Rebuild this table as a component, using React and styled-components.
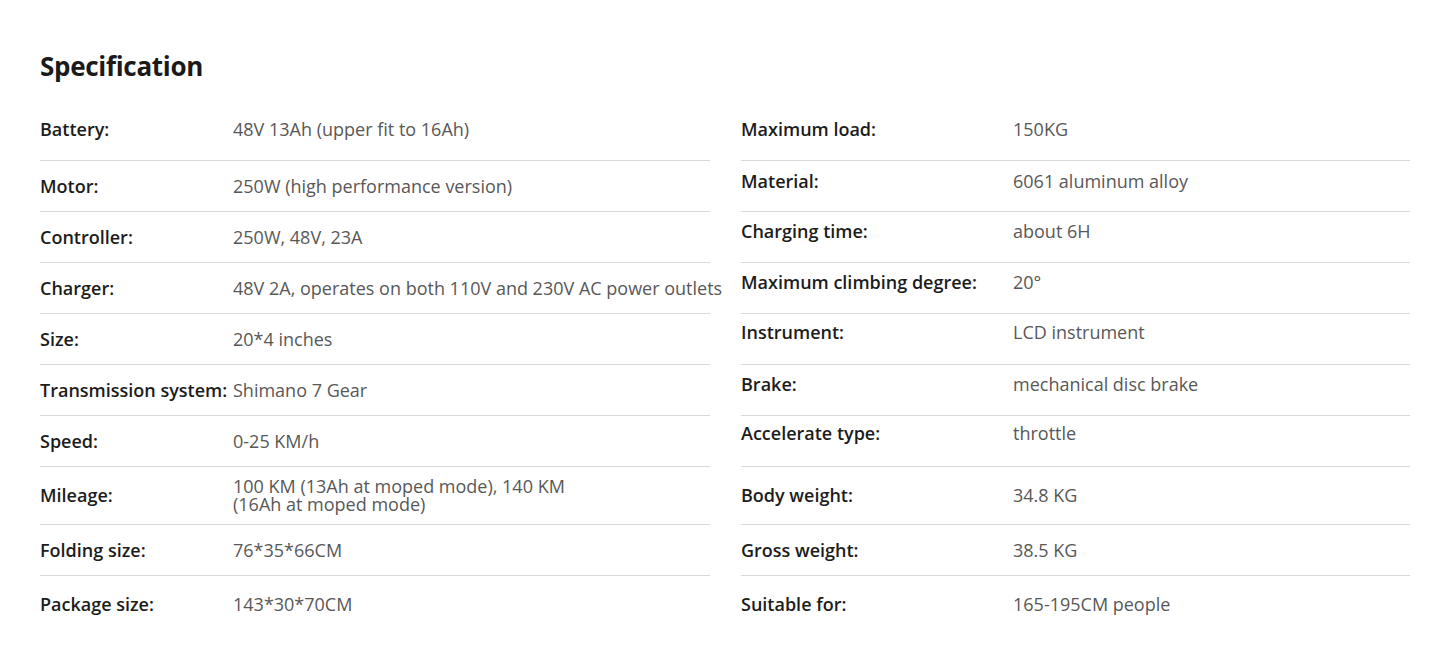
import React from "react";
import styled, { createGlobalStyle } from "styled-components";

const GlobalStyle = createGlobalStyle`
  html, body {
    margin: 0;
    padding: 0;
    background: #ffffff;
  }
  body {
    font-family: "Open Sans", "Liberation Sans", sans-serif;
    -webkit-font-smoothing: antialiased;
  }
`;

// each row holds a left and a right spec; lift nudges the text up a little as in the source
const specRows = [
  [{ label: "Battery:", value: "48V 13Ah (upper fit to 16Ah)" }, { label: "Maximum load:", value: "150KG" }],
  [{ label: "Motor:", value: "250W (high performance version)" }, { label: "Material:", value: "6061 aluminum alloy", lift: 5 }],
  [{ label: "Controller:", value: "250W, 48V, 23A" }, { label: "Charging time:", value: "about 6H", lift: 6 }],
  [
    { label: "Charger:", value: "48V 2A, operates on both 110V and 230V AC power outlets" },
    { label: "Maximum climbing degree:", value: "20°", lift: 6 },
  ],
  [{ label: "Size:", value: "20*4 inches" }, { label: "Instrument:", value: "LCD instrument", lift: 7 }],
  [{ label: "Transmission system:", value: "Shimano 7 Gear" }, { label: "Brake:", value: "mechanical disc brake", lift: 6 }],
  [{ label: "Speed:", value: "0-25 KM/h" }, { label: "Accelerate type:", value: "throttle", lift: 8 }],
  [
    { label: "Mileage:", value: ["100 KM (13Ah at moped mode), 140 KM", "(16Ah at moped mode)"] },
    { label: "Body weight:", value: "34.8 KG" },
  ],
  [{ label: "Folding size:", value: "76*35*66CM" }, { label: "Gross weight:", value: "38.5 KG" }],
  [{ label: "Package size:", value: "143*30*70CM" }, { label: "Suitable for:", value: "165-195CM people" }],
];

function SpecCell({ spec, labelWidth }) {
  const { label, value, lift = 0 } = spec;
  const multi = Array.isArray(value);
  return (
    <Cell>
      <Label $width={labelWidth} $lift={lift}>
        {label}
      </Label>
      <Value $lift={lift} $multi={multi}>
        {multi ? (
          <>
            {value[0]}
            <br />
            {value[1]}
          </>
        ) : (
          value
        )}
      </Value>
    </Cell>
  );
}

function App() {
  return (
    <>
      <GlobalStyle />
      <Page>
        <Title>Specification</Title>
        <Table>
          {specRows.map(([left, right]) => (
            <Row key={left.label}>
              <SpecCell spec={left} labelWidth={193} />
              <SpecCell spec={right} labelWidth={272} />
            </Row>
          ))}
        </Table>
      </Page>
    </>
  );
}

const Page = styled.div`
  width: 1440px;
  height: 661px;
  box-sizing: border-box;
  padding: 46px 30px 0 40px;
  background: #ffffff;
`;

const Title = styled.h1`
  margin: 0;
  font-size: 26px;
  line-height: 40px;
  font-weight: 700;
  color: #1a1a1a;
  letter-spacing: -0.3px;
`;

const Table = styled.div`
  display: flex;
  flex-direction: column;
  margin-top: 18px;
`;

const Cell = styled.div`
  display: flex;
  align-items: center;
  box-sizing: border-box;
  min-height: 51px;
  padding: 10px 0 11px;
  border-bottom: 1px solid #d9d9d9;
`;

const Row = styled.div`
  display: grid;
  grid-template-columns: 670px 669px;
  column-gap: 31px;

  &:first-child ${Cell} {
    min-height: 57px;
    padding-bottom: 17px;
  }

  &:last-child ${Cell} {
    border-bottom: none;
    padding-top: 15px;
  }
`;

const Label = styled.div`
  flex: 0 0 ${(p) => p.$width}px;
  font-size: 18px;
  line-height: 20px;
  font-weight: 600;
  color: #1c1c1c;
  white-space: nowrap;
  transform: translateY(-${(p) => p.$lift}px);
`;

const Value = styled.div`
  font-size: 18px;
  line-height: ${(p) => (p.$multi ? 18 : 20)}px;
  font-weight: 400;
  color: #585858;
  white-space: nowrap;
  transform: translateY(-${(p) => p.$lift}px);
`;

export default App;
